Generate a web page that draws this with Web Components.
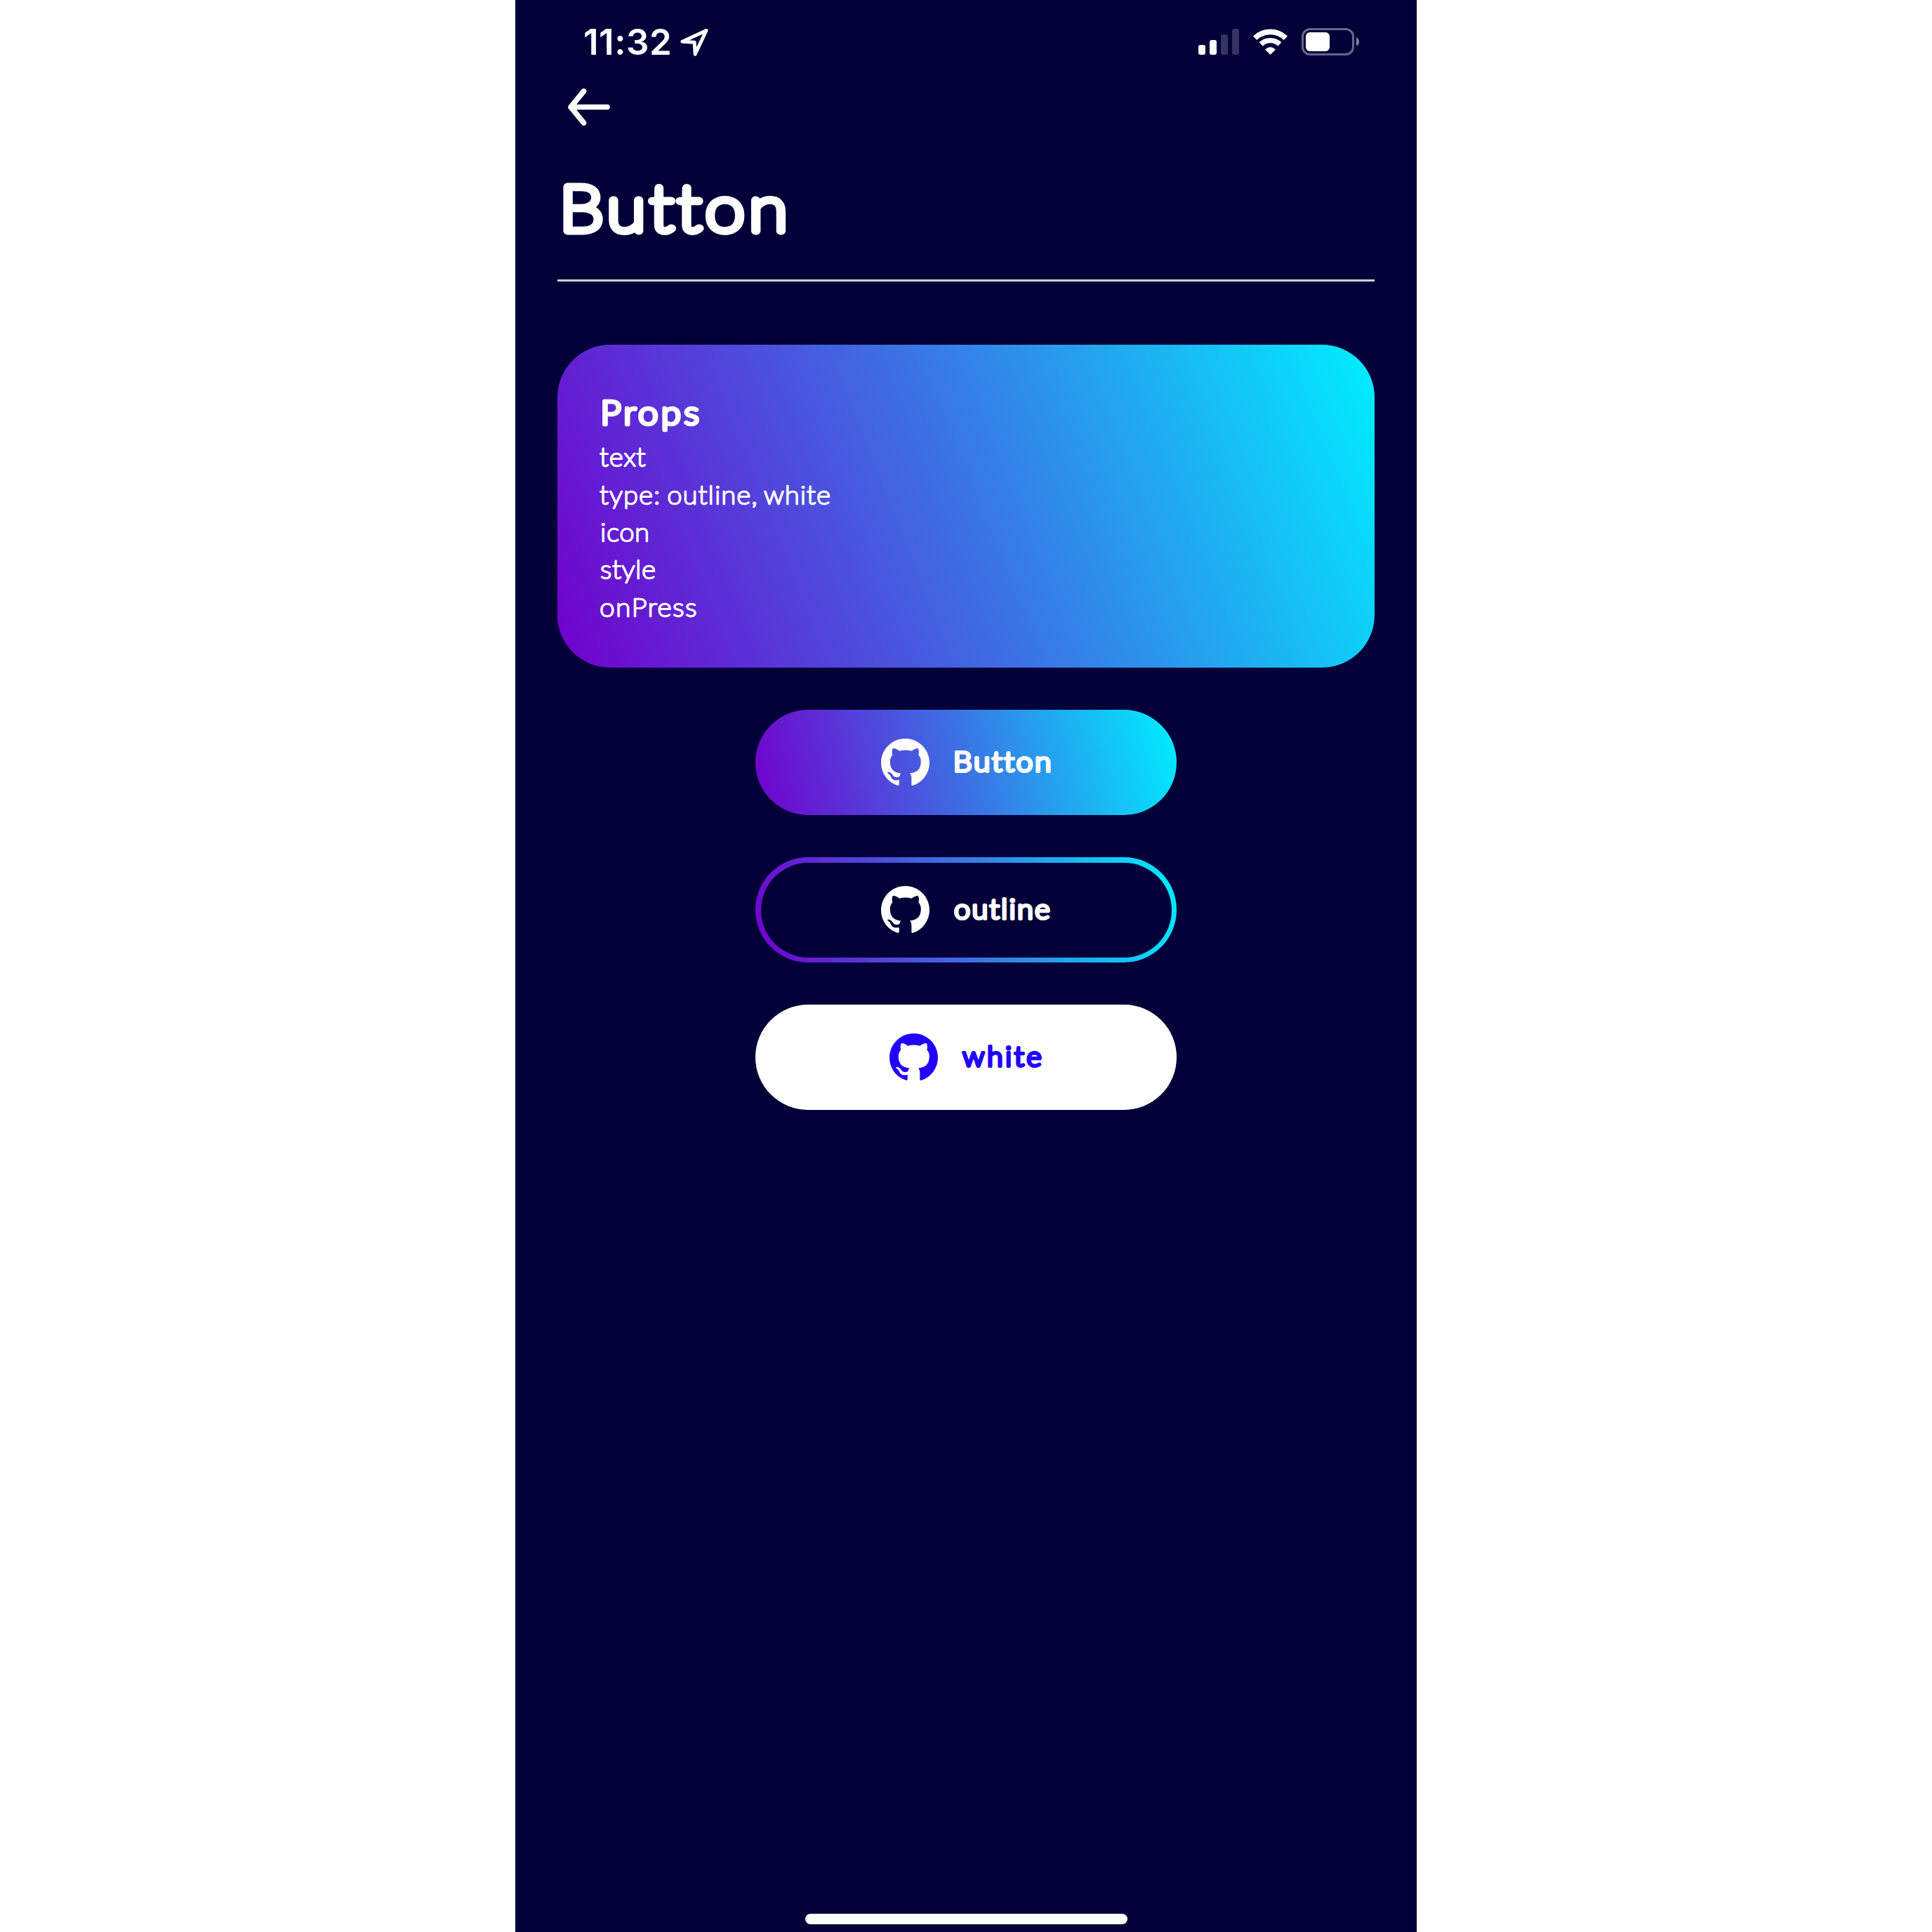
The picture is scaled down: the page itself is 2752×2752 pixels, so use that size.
<!DOCTYPE html>
<html lang="en">
<head>
<meta charset="utf-8">
<title>Button</title>
<style>
body { margin: 0; background: #fff; }
</style>
</head>
<body>
<phone-screen>
  <status-bar slot="status"></status-bar>
  <back-arrow slot="nav"></back-arrow>
  <round-text slot="title" text="Button" size="90.5" weight="100" stroke="10.8" stretch="1.12" width="316" cap="74"></round-text>
  <props-card>
    <round-text text="Props" size="46.4" weight="300" stroke="4.6" stretch="1.1" width="139.5" cap="38"></round-text>
    <prop-list>
      <round-text text="text" size="35" weight="100" stroke="2.6" stretch="1.08" width="66" cap="28"></round-text>
      <round-text text="type: outline, white" size="35" weight="100" stroke="2.6" stretch="1.08" word="-3" width="330" cap="28"></round-text>
      <round-text style="padding-left:1.5px" text="icon" size="35" weight="100" stroke="2.6" stretch="1.08" width="67" cap="28"></round-text>
      <round-text style="padding-left:1px" text="style" size="35" weight="100" stroke="2.6" stretch="1.08" width="79" cap="28"></round-text>
      <round-text style="padding-left:1px" text="onPress" size="35" weight="100" stroke="2.6" stretch="1.1" width="137" cap="28"></round-text>
    </prop-list>
  </props-card>
  <gradient-button kind="filled"><round-text style="padding:0 2px 0 3px" text="Button" size="38.6" weight="300" stroke="4" stretch="1.1" width="136" cap="32"></round-text></gradient-button>
  <gradient-button kind="outline"><round-text style="padding:0 2px 0 1.5px" text="outline" size="38.6" weight="300" stroke="4" stretch="1.07" width="137.5" cap="32"></round-text></gradient-button>
  <gradient-button kind="white"><round-text style="padding:0 2px 0 0" text="white" size="38.6" weight="300" stroke="4" stretch="1.06" width="115.5" cap="32"></round-text></gradient-button>
</phone-screen>
<script>
const define = (name, html, setup) => customElements.define(name, class extends HTMLElement {
  connectedCallback() {
    if (this.shadowRoot) return;
    this.attachShadow({ mode: 'open' }).innerHTML = html;
    if (setup) setup(this, this.shadowRoot);
  }
});

// Monoline text with rounded terminals, spaced so its ink fills the given width.
const ctx = document.createElement('canvas').getContext('2d');
define('round-text', `<style>
  :host { display: block; flex: none; }
  svg { display: block; overflow: visible; }
  text { fill: currentColor; stroke: currentColor; stroke-linejoin: round; stroke-linecap: round; white-space: pre; }
</style><svg><text></text></svg>`, (el, root) => {
  const num = (k, d) => parseFloat(el.getAttribute(k) ?? d);
  const size = num('size'), stroke = num('stroke', 0), width = num('width'), cap = num('cap'), stretch = num('stretch', 1), word = num('word', 0);
  const family = el.getAttribute('family') || 'Lato';
  const weight = el.getAttribute('weight');
  const str = el.getAttribute('text');
  ctx.font = `${weight} ${size}px ${family}, sans-serif`;
  const m = ctx.measureText(str);
  const ink = m.actualBoundingBoxLeft + m.actualBoundingBoxRight + word * (str.split(' ').length - 1);
  const spacing = (width / stretch - stroke - ink) / (str.length - 1);
  const svg = root.querySelector('svg'), text = root.querySelector('text');
  svg.setAttribute('width', width);
  svg.setAttribute('height', cap);
  text.textContent = str;
  text.style.font = ctx.font;
  text.style.letterSpacing = spacing + 'px';
  text.style.wordSpacing = word + 'px';
  text.style.strokeWidth = stroke;
  text.setAttribute('transform', `translate(${stroke * stretch / 2} ${cap - stroke / 2}) scale(${stretch} 1)`);
  text.setAttribute('x', m.actualBoundingBoxLeft);
});

define('phone-screen', `<style>
  :host { display: flex; flex-direction: column; box-sizing: border-box; width: 1284px; height: 2752px; margin: 0 auto; background: #030039; color: #fff; }
  .nav { display: flex; padding: 45.5px 75px 0; }
  .title { display: flex; padding: 81.5px 0 64px 8px; margin: 0 60px; border-bottom: 3px solid #d3d3d3; }
  main { display: flex; flex-direction: column; align-items: center; gap: 60px; margin: 90px 60px 0; flex: 1; }
  .home { align-self: center; width: 459px; height: 15px; border-radius: 8px; background: #fff; margin-bottom: 11px; }
</style>
<slot name="status"></slot>
<div class="nav"><slot name="nav"></slot></div>
<div class="title"><slot name="title"></slot></div>
<main><slot></slot></main>
<div class="home"></div>`);

define('status-bar', `<style>
  :host { display: flex; align-items: center; height: 40px; padding: 40px 80px 0 99px; }
  svg { display: block; flex: none; }
  .loc { margin-left: 14px; }
  .signal { margin-left: auto; }
  .wifi { margin-left: 18px; }
  .battery { margin-left: 18px; }
</style>
<round-text text="11:32" family="Inter" size="51" weight="600" stroke="0" width="121" cap="36"></round-text>
<svg class="loc" width="42" height="40" viewBox="0 0 42 40"><path d="M38 3.5 4 19.200 21.200 20.200 22.200 37.300Z" fill="none" stroke="#fff" stroke-width="5" stroke-linejoin="round"/></svg>
<svg class="signal" width="58" height="40" viewBox="0 0 58 40" fill="#fff"><rect y="24" width="10" height="14" rx="3"/><rect x="16" y="17" width="10" height="21" rx="3"/><g opacity=".2"><rect x="32" y="9" width="10" height="29" rx="3"/><rect x="48" y="1" width="10" height="37" rx="3"/></g></svg>
<svg class="wifi" width="53" height="40" viewBox="0 0 53 40" fill="none" stroke="#fff"><path d="M4.6 14.2A31.5 31.5 0 0 1 48.4 14.2" stroke-width="7.6"/><path d="M13.2 23A19.2 19.2 0 0 1 39.8 23" stroke-width="7.4"/><path d="M26.5 38 19 30.4Q26.5 23.4 34 30.4Z" fill="#fff" stroke="none"/></svg>
<svg class="battery" width="84" height="40" viewBox="0 0 84 40"><rect x="1.5" y="1.500" width="72" height="36" rx="10.5" fill="none" stroke="#fff" stroke-opacity=".4" stroke-width="3"/><rect x="6" y="6" width="34" height="27" rx="6" fill="#fff"/><path d="M78 13.200Q82 15 82 19.500T78 25.800Z" fill="#fff" opacity=".5"/></svg>`);

define('back-arrow', `<style>:host, svg { display: block; }</style>
<svg width="60" height="53" viewBox="0 0 60 53" fill="none" stroke="#fff" stroke-width="7.6" stroke-linecap="round" stroke-linejoin="round"><path d="M22.5 4 4 26.500 22.500 49M4 26.500H56"/></svg>`);

define('props-card', `<style>
  :host { display: flex; flex-direction: column; box-sizing: border-box; width: 1164px; height: 460px; border-radius: 75px; padding: 77.5px 63px; background: linear-gradient(68.44deg, #7200cc, #3b73e4 50%, #00eeff); }
</style><slot></slot>`);

define('prop-list', `<style>
  :host { display: flex; flex-direction: column; gap: 25.4px; margin: 30.7px 0 0 -3px; }
</style><slot></slot>`);

define('gradient-button', `<style>
  :host { display: flex; flex: none; width: 600px; height: 150px; box-sizing: border-box; border-radius: 75px; padding: 8px 7px 7px 8px; background: linear-gradient(75.96deg, #7200cc, #3b73e4 50%, #00eeff); }
  :host([kind=white]) { background: #fff; color: #2200ff; }
  .face { flex: 1; display: flex; align-items: center; justify-content: center; border-radius: 68px; gap: 33px; }
  :host([kind=outline]) .face { background: #030039; }
  svg { display: block; }
  .label { margin-bottom: 4px; }
</style>
<div class="face"><svg width="69" height="69" viewBox="0 0 16 16" fill="currentColor"><path d="M8 0C3.58 0 0 3.58 0 8c0 3.54 2.29 6.53 5.47 7.45.4.07.5-.1.5-.3 0-.19-.01-.82-.01-1.45-2.01.37-2.48-.49-2.64-.94-.09-.23-.48-.94-.82-1.13-.28-.15-.68-.52-.01-.53.63-.01 1.08.58 1.28.82.72 1.21 1.87.87 2.33.66.07-.52.28-.87.51-1.07-1.78-.2-3.64-.89-3.64-3.95 0-.87.31-1.59.82-2.15-.08-.2-.36-1.02.08-2.12 0 0 .67-.21 2.2.82.64-.18 1.32-.27 2-.27s1.36.09 2 .27c1.53-1.04 2.2-.82 2.2-.82.44 1.1.16 1.92.08 2.12.51.56.82 1.27.82 2.15 0 3.07-1.87 3.75-3.65 3.95.29.25.54.73.54 1.48 0 1.07-.01 1.93-.01 2.2 0 .21.15.4.5.3A8.01 8.01 0 0 0 16 8c0-4.42-3.58-8-8-8z"/></svg><div class="label"><slot></slot></div></div>`);
</script>
</body>
</html>
